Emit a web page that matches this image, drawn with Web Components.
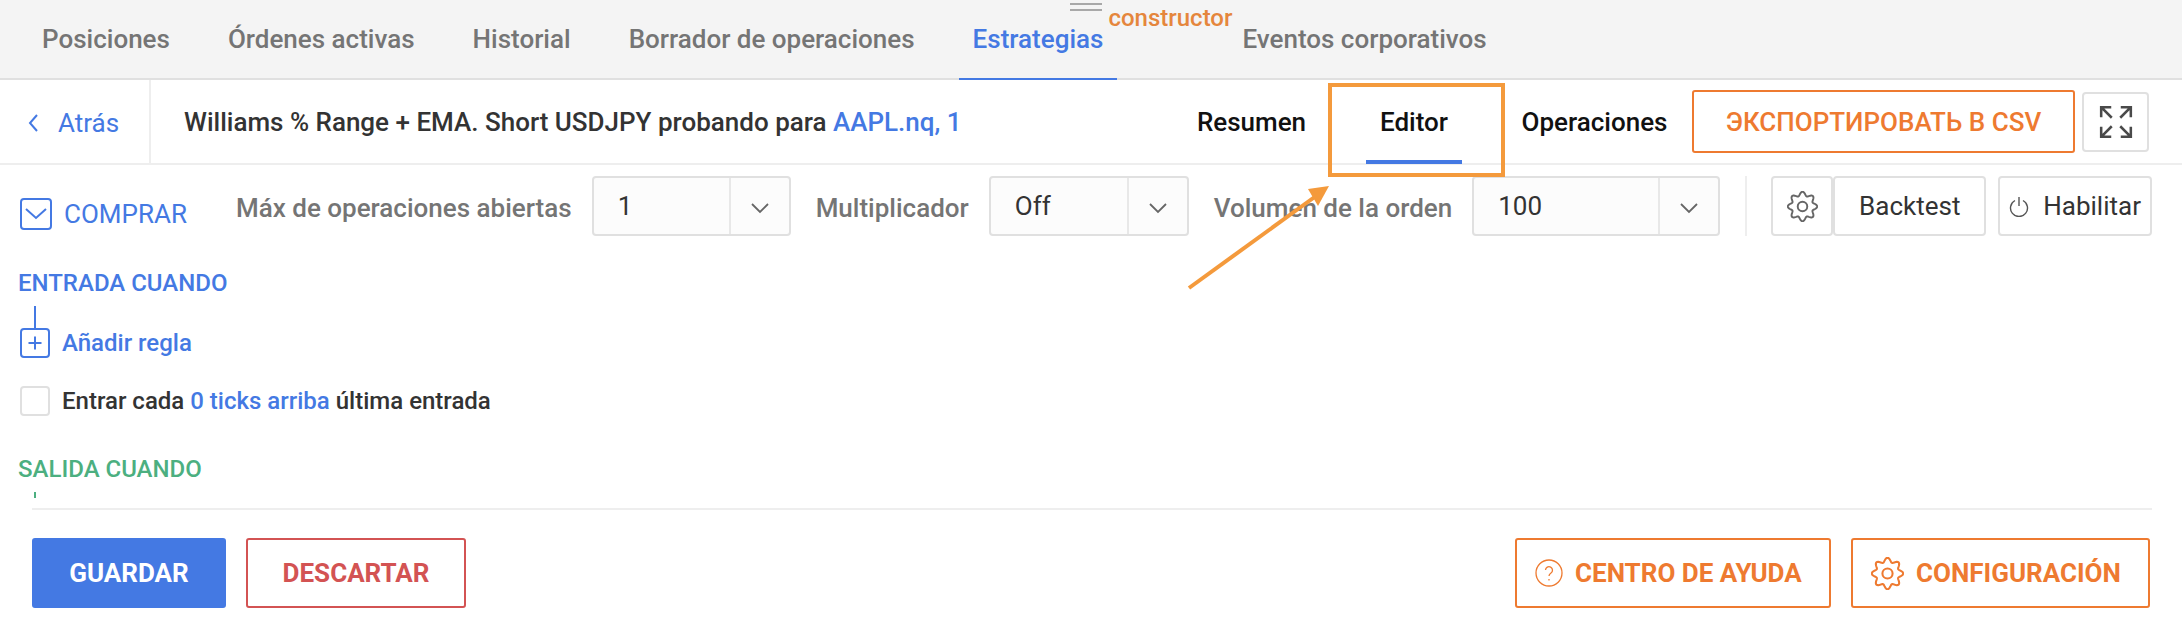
<!DOCTYPE html>
<html>
<head>
<meta charset="utf-8">
<style>
	html, body { margin: 0; background: #fff; }
	body { font-family: Roboto, "Liberation Sans", sans-serif; width: 2182px; height: 632px; overflow: hidden; position: relative; }
</style>
</head>
<body>
<strategy-page></strategy-page>

<script>
const BLUE = '#4479e3';
const ORANGE = '#ee7a30';

// the cog is the same everywhere, only size and colour differ
const gearPath = (() => {
	let pts = [];
	for (let i = 0; i < 160; i++) {
		const t = i / 160 * Math.PI * 2;
		const r = 9.9 + 1.5 * Math.cos(8 * t);
		pts.push(`${(12 + r * Math.sin(t)).toFixed(2)} ${(12 - r * Math.cos(t)).toFixed(2)}`);
	}
	return 'M' + pts.join('L') + 'Z';
})();
const gearIcon = (size, color, sw = 1.5) => `<svg width="${size}" height="${size}" viewBox="0 0 24 24" fill="none" stroke="${color}" stroke-width="${sw}" stroke-linejoin="round"><path d="${gearPath}"/><circle cx="12" cy="12" r="3.700"/></svg>`;

class BaseEl extends HTMLElement {
	constructor() {
		super();
		this.attachShadow({mode: 'open'}).innerHTML = this.render();
	}
}

class TabBar extends BaseEl {
	render() {
		return `<style>
			:host { display: flex; height: 78px; background: #f4f4f4; border-bottom: 2px solid #e0e0e0; padding-left: 28px; gap: 30px; }
		</style><slot></slot>`;
	}
}

class TabItem extends BaseEl {
	render() {
		return `<style>
			:host { display: flex; align-items: center; height: 80px; padding: 0 14px; box-sizing: border-box; font-size: 26px; font-weight: 500; color: #757575; border-bottom: 2px solid transparent; white-space: nowrap; }
			:host([active]) { color: ${BLUE}; border-bottom-color: ${BLUE}; }
		</style><slot></slot>`;
	}
}

class TabBadge extends BaseEl {
	render() {
		return `<style>
			:host { display: block; width: 81px; margin-left: -30px; position: relative; }
			.lines { position: absolute; left: -47px; top: 3px; width: 32px; height: 4px; border-top: 2px solid #a8a8a8; border-bottom: 2px solid #a8a8a8; }
			.txt { position: absolute; left: -9px; top: 4px; font-size: 24px; font-weight: 500; line-height: 28px; color: #e5863c; }
		</style><div class="lines"></div><div class="txt"><slot></slot></div>`;
	}
}

class SubHeader extends BaseEl {
	render() {
		return `<style>
			:host { display: flex; align-items: center; height: 83px; border-bottom: 2px solid #eee; font-size: 26px; font-weight: 500; color: #333; }
			.back { display: flex; align-items: center; gap: 19px; width: 151px; height: 85px; box-sizing: border-box; padding-left: 27px; margin-bottom: -2px; border-right: 2px solid #eee; color: ${BLUE}; font-weight: 400; }
			.title { margin-left: 33px; flex: 1; white-space: nowrap; }
			.right { display: flex; align-items: center; }
		</style>
		<div class="back">
			<svg width="12" height="20" viewBox="0 0 12 20" fill="none" stroke="${BLUE}" stroke-width="2"><path d="M10 2L3 10l7 8"/></svg>
			<span>Atrás</span>
		</div>
		<div class="title"><slot name="title"></slot></div>
		<div class="right"><slot></slot></div>`;
	}
}

class ViewTab extends BaseEl {
	render() {
		return `<style>
			:host { display: flex; align-items: center; justify-content: center; height: 83px; font-size: 26px; font-weight: 500; color: #111; box-sizing: border-box; position: relative; }
			:host([active])::after { content: ''; position: absolute; left: 50%; margin-left: -48px; width: 96px; height: 4px; bottom: -1px; background: ${BLUE}; }
		</style><slot></slot>`;
	}
}

class OutlineBtn extends BaseEl {
	render() {
		return `<style>
			:host { display: inline-flex; align-items: center; justify-content: center; box-sizing: border-box; height: 70px; border: 2px solid var(--c, ${ORANGE}); border-radius: 3px; color: var(--c, ${ORANGE}); font-size: 26px; font-weight: 700; white-space: nowrap; gap: 12px; background: #fff; }
			:host([filled]) { background: var(--c); color: #fff; }
			:host([icon]) { justify-content: flex-start; padding-left: 18px; }
		</style><slot></slot>`;
	}
}

class GreyBtn extends BaseEl {
	render() {
		return `<style>
			:host { display: inline-flex; align-items: center; justify-content: center; box-sizing: border-box; height: 60px; border: 2px solid #e0e0e0; border-radius: 4px; font-size: 26px; color: #333; background: #fff; white-space: nowrap; gap: 14px; }
		</style><slot></slot>`;
	}
}

class SelectBox extends BaseEl {
	render() {
		return `<style>
			:host { display: flex; height: 60px; box-sizing: border-box; border: 2px solid #e0e0e0; border-radius: 4px; background: #fcfcfc; color: #333; font-size: 26px; }
			.val { flex: 1; display: flex; align-items: center; padding: 0 0 1px 24px; }
			.arrow { width: 60px; border-left: 2px solid #e8e8e8; display: flex; align-items: center; justify-content: center; padding-top: 4px; box-sizing: border-box; }
		</style>
		<div class="val"><slot></slot></div>
		<div class="arrow"><svg width="18" height="11" viewBox="0 0 18 11" fill="none" stroke="#666" stroke-width="1.800"><path d="M1 1l8 8 8-8"/></svg></div>`;
	}
}

class FieldLabel extends BaseEl {
	render() {
		return `<style>
			:host { display: block; font-size: 26px; font-weight: 500; color: #757575; white-space: nowrap; }
		</style><slot></slot>`;
	}
}

class ToolBar extends BaseEl {
	render() {
		return `<style>
			:host { display: flex; align-items: flex-start; height: 60px; padding: 11px 0 0 20px; }
			.side { display: flex; align-items: center; gap: 12px; width: 216px; flex: none; padding-top: 22px; font-size: 26px; color: ${BLUE}; }
		</style>
		<div class="side">
			<svg width="32" height="32" viewBox="0 0 32 32" fill="none" stroke="${BLUE}" stroke-width="2"><rect x="1" y="1" width="30" height="30" rx="3"/><path d="M6 11l10 9 10-9"/></svg>
			<span>COMPRAR</span>
		</div>
		<slot></slot>`;
	}
}

class RuleBlock extends BaseEl {
	render() {
		return `<style>
			:host { display: block; padding: 0 0 0 18px; }
			.head { font-size: 24px; font-weight: 500; line-height: 26px; color: var(--c); }
			.line { width: 2px; margin-left: 16px; background: var(--c); height: var(--h, 22px); margin-top: 10px; }
		</style>
		<div class="head"><slot name="head"></slot></div>
		<div class="line"></div>
		<slot></slot>`;
	}
}

class AddRule extends BaseEl {
	render() {
		return `<style>
			:host { display: flex; align-items: center; gap: 12px; margin-left: 2px; height: 30px; font-size: 24px; font-weight: 500; color: ${BLUE}; }
		</style>
		<svg width="30" height="30" viewBox="0 0 30 30" fill="none" stroke="${BLUE}" stroke-width="2"><rect x="1" y="1" width="28" height="28" rx="3"/><path d="M15 8.500v13M8.500 15h13"/></svg>
		<span><slot></slot></span>`;
	}
}

class CheckRow extends BaseEl {
	render() {
		return `<style>
			:host { display: flex; align-items: center; gap: 12px; height: 30px; margin: 28px 0 0 20px; font-size: 24px; font-weight: 500; color: #333; white-space: nowrap; }
			.box { width: 30px; height: 30px; box-sizing: border-box; border: 2px solid #e0e0e0; border-radius: 4px; }
		</style><div class="box"></div><span><slot></slot></span>`;
	}
}

class FootBar extends BaseEl {
	render() {
		return `<style>
			:host { display: flex; justify-content: space-between; margin: 10px 30px 0 32px; padding-top: 28px; border-top: 2px solid #eee; }
			div { display: flex; gap: 20px; }
			.r { padding-right: 2px; }
		</style><div><slot name="left"></slot></div><div class="r"><slot name="right"></slot></div>`;
	}
}

// orange box and arrow drawn on top of the screenshot, so they sit on a free canvas
class NoteLayer extends BaseEl {
	render() {
		return `<style>
			:host { position: absolute; left: 0; top: 0; width: 2182px; height: 632px; pointer-events: none; }
			svg { display: block; }
		</style>
		<svg width="2182" height="632" fill="none">
			<rect x="1330" y="85" width="173" height="90" stroke="#f49a3c" stroke-width="4"/>
			<path d="M1189 288L1316 196" stroke="#f49a3c" stroke-width="4"/>
			<path d="M1329 186L1308 189L1318 206Z" fill="#f49a3c"/>
		</svg>`;
	}
}

class StrategyPage extends BaseEl {
	render() {
		return `<style>
			:host { display: block; }
			.sep { width: 2px; height: 60px; background: #eee; margin: 0 24px 0 25px; flex: none; }
			.main { padding-top: 34px; }
			svg { display: block; }
		</style>
		<tab-bar>
			<tab-item>Posiciones</tab-item>
			<tab-item>Órdenes activas</tab-item>
			<tab-item>Historial</tab-item>
			<tab-item>Borrador de operaciones</tab-item>
			<tab-item active>Estrategias</tab-item>
			<tab-badge>constructor</tab-badge>
			<tab-item>Eventos corporativos</tab-item>
		</tab-bar>
		<sub-header>
			<span slot="title">Williams % Range + EMA. Short USDJPY probando para <a style="color:${BLUE};text-decoration:none">AAPL.nq, 1</a></span>
			<view-tab style="width:109px">Resumen</view-tab>
			<view-tab active style="width:216px">Editor</view-tab>
			<view-tab style="width:145px">Operaciones</view-tab>
			<outline-btn style="height:63px;width:383px;margin-left:25px;font-weight:500">ЭКСПОРТИРОВАТЬ В CSV</outline-btn>
			<grey-btn style="width:67px;margin:0 33px 0 7px">
				<svg width="36" height="36" viewBox="0 0 34 34" fill="none" stroke="#4a4a4a" stroke-width="2.400"><path d="M3 12.500V3h9.500M3 3l10 10M31 12.500V3h-9.500M31 3L21 13M3 21.500V31h9.500M3 31l10-10M31 21.500V31h-9.500M31 31L21 21"/></svg>
			</grey-btn>
		</sub-header>
		<tool-bar>
			<field-label style="margin:17px 20px 0 0">Máx de operaciones abiertas</field-label>
			<select-box style="width:199px">1</select-box>
			<field-label style="margin:17px 20px 0 25px">Multiplicador</field-label>
			<select-box style="width:200px">Off</select-box>
			<field-label style="margin:17px 20px 0 25px">Volumen de la orden</field-label>
			<select-box style="width:248px">100</select-box>
			<div class="sep"></div>
			<grey-btn style="width:62px">${gearIcon(31, '#666')}</grey-btn>
			<grey-btn style="width:153px">Backtest</grey-btn>
			<grey-btn style="width:154px;margin-left:12px;justify-content:flex-start;padding-left:9px">
				<svg width="20" height="21" viewBox="0 0 20 21" fill="none" stroke="#555" stroke-width="1.400"><path d="M6 4.500a8.500 8.500 0 1 0 8 0M10 1v9"/></svg>
				<span>Habilitar</span>
			</grey-btn>
		</tool-bar>
		<div class="main">
			<rule-block style="--c:${BLUE}">
				<span slot="head">ENTRADA CUANDO</span>
				<add-rule>Añadir regla</add-rule>
			</rule-block>
			<check-row>Entrar cada <a style="color:${BLUE}">0 ticks arriba</a> última entrada</check-row>
			<rule-block style="--c:#4caf80;--h:6px;margin-top:40px">
				<span slot="head">SALIDA CUANDO</span>
			</rule-block>
		</div>
		<foot-bar>
			<outline-btn slot="left" filled style="--c:${BLUE};width:194px">GUARDAR</outline-btn>
			<outline-btn slot="left" style="--c:#d35353;width:220px">DESCARTAR</outline-btn>
			<outline-btn slot="right" icon style="width:316px">
				<svg width="28" height="28" viewBox="0 0 28 28" fill="none" stroke="${ORANGE}" stroke-width="1.300"><circle cx="14" cy="14" r="13"/><path d="M10.500 11a3.500 3.500 0 1 1 5.500 3c-1.300.9-2 1.500-2 3M14 20v1.500"/></svg>
				<span>CENTRO DE AYUDA</span>
			</outline-btn>
			<outline-btn slot="right" icon style="width:299px">
				${gearIcon(33, ORANGE)}
				<span>CONFIGURACIÓN</span>
			</outline-btn>
		</foot-bar>
		<note-layer></note-layer>`;
	}
}

// children first, page last, so upgrades of nested tags find their classes
customElements.define('tab-bar', TabBar);
customElements.define('tab-item', TabItem);
customElements.define('tab-badge', TabBadge);
customElements.define('sub-header', SubHeader);
customElements.define('view-tab', ViewTab);
customElements.define('outline-btn', OutlineBtn);
customElements.define('grey-btn', GreyBtn);
customElements.define('select-box', SelectBox);
customElements.define('field-label', FieldLabel);
customElements.define('tool-bar', ToolBar);
customElements.define('rule-block', RuleBlock);
customElements.define('add-rule', AddRule);
customElements.define('check-row', CheckRow);
customElements.define('foot-bar', FootBar);
customElements.define('note-layer', NoteLayer);
customElements.define('strategy-page', StrategyPage);
</script>
</body>
</html>
